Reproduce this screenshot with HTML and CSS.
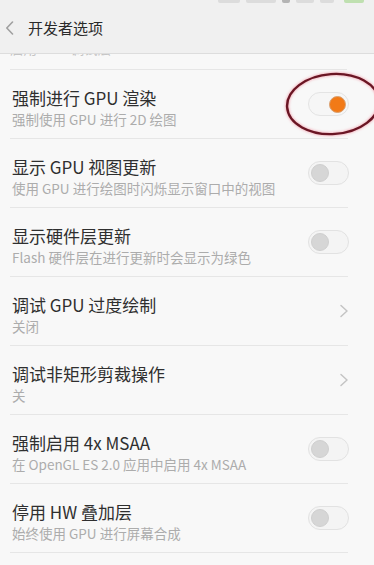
FILE: index.html
```html
<!DOCTYPE html>
<html lang="zh-CN">
<head>
<meta charset="utf-8">
<title>开发者选项</title>
<link rel="stylesheet" href="styles.css">
</head>
<body>
<div class="screen">
  <header class="header">
    <div class="status">
      <span class="si si-a"></span>
      <span class="si si-b"></span>
      <span class="si si-c"></span>
      <span class="si si-d"></span>
      <span class="si si-e"></span>
      <span class="si si-bat"></span>
    </div>
    <div class="bar">
      <svg class="back" width="9" height="14" viewBox="0 0 9 14"><path d="M7.5 1 L1.8 7 L7.5 13" fill="none" stroke="#a0a0a0" stroke-width="1.6" stroke-linecap="round" stroke-linejoin="round"/></svg>
      <span class="htitle">开发者选项</span>
    </div>
  </header>

  <div class="list">
    <div class="partial"><span class="psub">启用 GPU 调试层</span></div>

    <div class="row">
      <div class="text"><div class="title">强制进行 GPU 渲染</div><div class="sub">强制使用 GPU 进行 2D 绘图</div></div>
      <span class="toggle on"><span class="knob"></span></span>
      <svg class="mark" width="100" height="68" viewBox="0 0 100 68"><ellipse cx="50" cy="34" rx="46" ry="30" transform="rotate(-4 50 34)" fill="none" stroke="#6a1624" stroke-width="2.4"/></svg>
    </div>

    <div class="row">
      <div class="text"><div class="title">显示 GPU 视图更新</div><div class="sub">使用 GPU 进行绘图时闪烁显示窗口中的视图</div></div>
      <span class="toggle"><span class="knob"></span></span>
    </div>

    <div class="row">
      <div class="text"><div class="title">显示硬件层更新</div><div class="sub">Flash 硬件层在进行更新时会显示为绿色</div></div>
      <span class="toggle"><span class="knob"></span></span>
    </div>

    <div class="row">
      <div class="text"><div class="title">调试 GPU 过度绘制</div><div class="sub">关闭</div></div>
      <svg class="chev" width="10" height="14" viewBox="0 0 10 14"><path d="M2 1.5 L8 7 L2 12.5" fill="none" stroke="#c4c4c4" stroke-width="1.5" stroke-linecap="round" stroke-linejoin="round"/></svg>
    </div>

    <div class="row">
      <div class="text"><div class="title">调试非矩形剪裁操作</div><div class="sub">关</div></div>
      <svg class="chev" width="10" height="14" viewBox="0 0 10 14"><path d="M2 1.5 L8 7 L2 12.5" fill="none" stroke="#c4c4c4" stroke-width="1.5" stroke-linecap="round" stroke-linejoin="round"/></svg>
    </div>

    <div class="row">
      <div class="text"><div class="title">强制启用 4x MSAA</div><div class="sub">在 OpenGL ES 2.0 应用中启用 4x MSAA</div></div>
      <span class="toggle"><span class="knob"></span></span>
    </div>

    <div class="row">
      <div class="text"><div class="title">停用 HW 叠加层</div><div class="sub">始终使用 GPU 进行屏幕合成</div></div>
      <span class="toggle"><span class="knob"></span></span>
    </div>
  </div>
</div>
</body>
</html>
```

FILE: styles.css
```css
* { box-sizing: border-box; }
html, body { margin: 0; padding: 0; }
body {
  background: #f8f8f8;
  font-family: "Noto Sans CJK SC", "Noto Sans", sans-serif;
  overflow: hidden;
}
.screen { width: 374px; height: 565px; overflow: hidden; background: #f8f8f8; }

.header {
  height: 54px;
  background: #f0f0f0;
  border-bottom: 1px solid #dddddd;
}
.status {
  height: 4px;
  overflow: hidden;
  display: flex;
  justify-content: flex-end;
  align-items: flex-start;
  gap: 6px;
  padding-right: 10px;
}
.si { display: block; height: 8px; margin-top: -5px; background: #dcdcdc; border-radius: 2px; }
.si-a { width: 22px; }
.si-b { width: 30px; }
.si-c { width: 8px; background: #b4b4b4; }
.si-d { width: 18px; }
.si-e { width: 14px; }
.si-bat { width: 20px; background: #bfe0b0; margin-left: 4px; }

.bar {
  height: 49px;
  display: flex;
  align-items: center;
  padding-left: 5px;
  padding-bottom: 2px;
}
.back { display: block; }
.htitle {
  margin-left: 14px;
  font-size: 15px;
  color: #2a2a2a;
  line-height: 20px;
}

.list { background: #f8f8f8; }
.partial {
  height: 16px;
  margin: 0 27px 0 10px;
  overflow: hidden;
  border-bottom: 1px solid #e6e6e6;
}
.psub {
  display: block;
  font-size: 13.5px;
  line-height: 18px;
  margin-top: -15px;
  color: #c4c4c4;
}

.row {
  position: relative;
  height: 69px;
  margin: 0 26px 0 10px;
  padding-left: 2px;
  border-bottom: 1px solid #e6e6e6;
  display: flex;
  align-items: center;
}
.text {
  flex: 1;
  align-self: flex-start;
  padding-top: 18px;
}
.title {
  font-size: 17px;
  line-height: 20px;
  color: #2f2f2f;
}
.sub {
  font-size: 13.5px;
  line-height: 18px;
  margin-top: 2px;
  color: #acacac;
}

.toggle {
  width: 41px;
  height: 24px;
  border-radius: 12px;
  border: 1px solid #e2e2e2;
  background: #f4f4f4;
  display: flex;
  align-items: center;
  padding: 0 2px;
  margin-right: -1px;
}
.knob {
  width: 18px;
  height: 18px;
  border-radius: 50%;
  background: #d6d6d6;
  border: 1px solid #cfcfcf;
}
.toggle.on { background: #f6f6f6; justify-content: flex-end; border-color: #e4e4e4; }
.toggle.on .knob {
  width: 17px;
  height: 17px;
  background: #f27a17;
  border: 1px solid #d9a070;
}

.chev { display: block; margin-right: -1px; }

.mark {
  position: absolute;
  left: 273px;
  top: 0px;
  overflow: visible;
  filter: drop-shadow(0 0 1.5px rgba(240, 110, 130, 0.8));
}
```
